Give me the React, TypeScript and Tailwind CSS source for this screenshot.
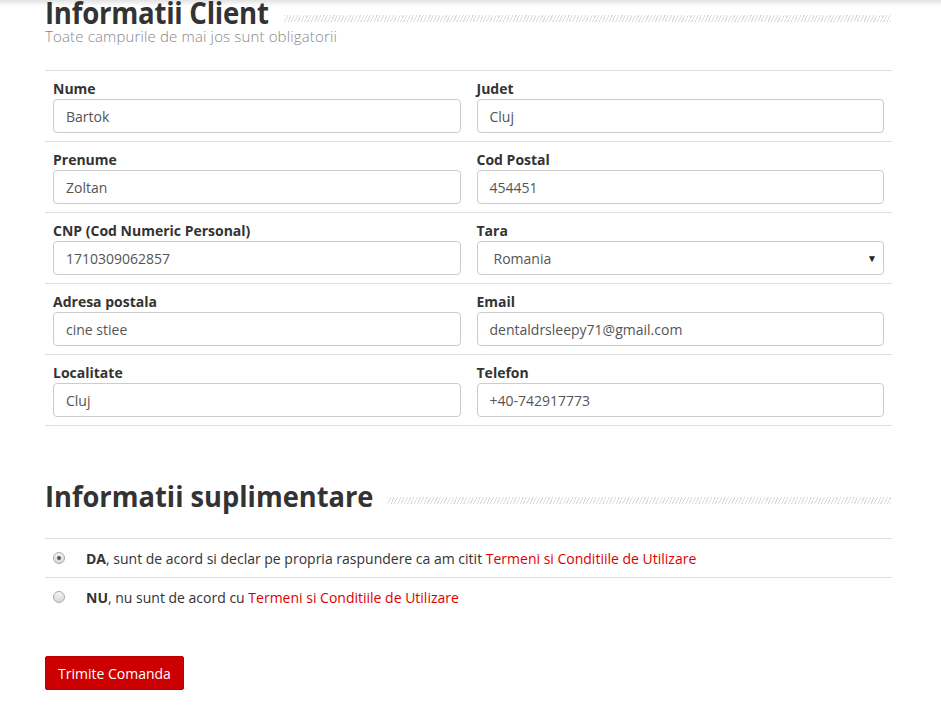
import React from "react"

const rows = [
  { left: { label: "Nume", value: "Bartok" }, right: { label: "Judet", value: "Cluj" } },
  { left: { label: "Prenume", value: "Zoltan" }, right: { label: "Cod Postal", value: "454451" } },
  { left: { label: "CNP (Cod Numeric Personal)", value: "1710309062857" }, right: { label: "Tara", value: "Romania", select: true } },
  { left: { label: "Adresa postala", value: "cine stiee" }, right: { label: "Email", value: "dentaldrsleepy71@gmail.com" } },
  { left: { label: "Localitate", value: "Cluj" }, right: { label: "Telefon", value: "+40-742917773" } },
]

type Field = { label: string; value: string; select?: boolean }

function Stripes() {
  return (
    <div className="flex-1 h-[7px] bg-[repeating-linear-gradient(115deg,#dcdcdc_0px,#dcdcdc_1px,transparent_1px,transparent_3px)]" />
  )
}

function FieldCell({ f }: { f: Field }) {
  return (
    <div className="flex flex-col pt-[8px] pb-[8px] px-[8px]">
      <label className="text-[14px] font-bold text-[#333] leading-[20px]">{f.label}</label>
      {f.select ? (
        <div className="h-[34px] border border-[#ccc] rounded-[4px] flex items-center pl-[16px] pr-[6px] text-[14px] text-[#555]">
          <span className="flex-1">{f.value}</span>
          <span className="text-[10px] text-[#222]">▼</span>
        </div>
      ) : (
        <div className="h-[34px] border border-[#ccc] rounded-[4px] flex items-center px-[12px] text-[14px] text-[#555]">
          {f.value}
        </div>
      )}
    </div>
  )
}

export default function App() {
  return (
    <div className="relative min-h-[728px] bg-white font-['Open_Sans',sans-serif] text-[#333]">
      <div className="absolute top-0 left-0 right-0 h-[6px] bg-gradient-to-b from-[#e2e2e2] to-transparent" />
      <div className="w-[847px] ml-[45px]">
        <div className="flex items-center h-[28px]">
          <div className="w-[226px] shrink-0">
            <h1 className="inline-block whitespace-nowrap origin-left scale-x-[0.89] text-[31px] font-bold text-[#333] leading-[28px] tracking-[-0.3px]">
              Informatii Client
            </h1>
          </div>
          <div className="flex-1 pl-[13px] pr-[1px] pt-[8px]"><Stripes /></div>
        </div>
        <div>
          <p className="whitespace-nowrap text-[15px] text-[#888] font-light leading-[16px] tracking-[0.15px]">
            Toate campurile de mai jos sunt obligatorii
          </p>
        </div>

        <div className="mt-[26px] border-t border-[#ddd]">
          {rows.map((r, i) => (
            <div key={i} className="grid grid-cols-2 border-b border-[#ddd] h-[71px]">
              <FieldCell f={r.left} />
              <FieldCell f={r.right} />
            </div>
          ))}
        </div>

        <div className="flex items-center mt-[56px] h-[30px]">
          <div className="w-[330px] shrink-0">
            <h2 className="inline-block whitespace-nowrap origin-left scale-x-[0.94] text-[29px] font-bold text-[#333] leading-[30px]">
              Informatii suplimentare
            </h2>
          </div>
          <div className="flex-1 pl-[12px] pr-[1px] pt-[6px]"><Stripes /></div>
        </div>

        <div className="mt-[26px] border-t border-[#ddd]">
          <div className="flex items-center h-[39px] border-b border-[#ddd] pl-[8px]">
            <span className="w-[12px] h-[12px] rounded-full border border-[#aaa] bg-gradient-to-b from-[#f4f4f4] to-[#d8d8d8] flex items-center justify-center">
              <span className="w-[4px] h-[4px] rounded-full bg-[#555]" />
            </span>
            <span className="ml-[21px] whitespace-nowrap text-[14px] text-[#333]">
              <b>DA</b>, sunt de acord si declar pe propria raspundere ca am citit <span className="text-[#d00]">Termeni si Conditiile de Utilizare</span>
            </span>
          </div>
          <div className="flex items-center h-[38px] pl-[8px]">
            <span className="w-[12px] h-[12px] rounded-full border border-[#aaa] bg-gradient-to-b from-[#f4f4f4] to-[#d8d8d8]" />
            <span className="ml-[21px] whitespace-nowrap text-[14px] text-[#333]">
              <b>NU</b>, nu sunt de acord cu <span className="text-[#d00]">Termeni si Conditiile de Utilizare</span>
            </span>
          </div>
        </div>

        <button className="mt-[40px] h-[34px] px-[12px] bg-[#cc0000] text-white text-[14px] rounded-[2px] border border-[#b00]">
          Trimite Comanda
        </button>
      </div>
    </div>
  )
}
